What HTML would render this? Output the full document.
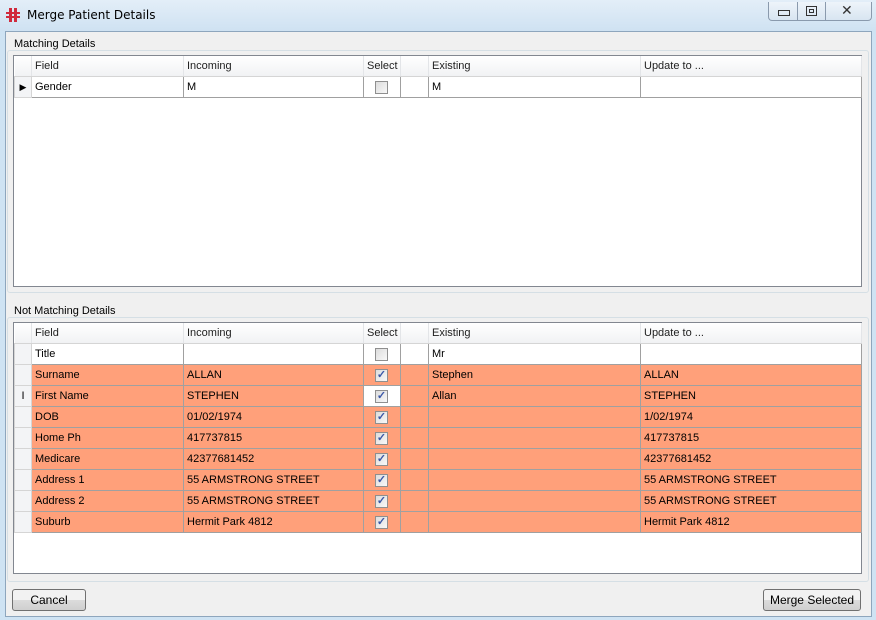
<!DOCTYPE html>
<html><head><style>
body{margin:0;width:876px;height:620px;overflow:hidden;font-family:"Liberation Sans",sans-serif;font-size:11px;color:#000;background:#cfe3f3;position:relative}
.title{position:absolute;left:0;top:0;width:876px;height:31px;background:linear-gradient(#e3eef8,#cfe2f2);}
.client{position:absolute;left:5px;top:31px;width:865px;height:584px;background:#f0f0f0;border:1px solid #8ea6bd}
.ab{position:absolute}
.gb{position:absolute;border:1px solid #d5dfe5;border-radius:3px}
.lbl{position:absolute;background:#f0f0f0;padding:0 2px}
table{position:absolute;border-collapse:collapse;table-layout:fixed;background:#fff}
td{height:20px;padding:0 0 0 3px;border:1px solid #a0a0a0;white-space:nowrap;overflow:hidden}
tr.h td{background:linear-gradient(#fff,#f1f2f4);border:none;border-right:1px solid #e3e5e8;border-bottom:1px solid #d5d5d5;color:#1e1e1e}
td.rh{background:#f3f4f6;border-color:#d5d5d5;padding:0}
tr.o td{background:#ffa07a}
tr.o td.rh{background:#f3f4f6}
.cb{display:inline-block;width:11px;height:11px;border:1px solid #8f8f8f;background:linear-gradient(135deg,#dcdcdc,#f8f8f8);vertical-align:middle;margin-left:8px;position:relative;font-size:11px;line-height:11px;color:#3b58a8;text-align:center;font-weight:bold}
.btn{position:absolute;height:20px;border:1px solid #707070;border-radius:3px;background:linear-gradient(#f2f2f2 50%,#dcdcdc 50%,#cfcfcf);text-align:center;line-height:20px;font-size:12px}
.grid{position:absolute;border:1px solid #828790;background:#fff}
</style></head><body>
<div class="title"></div>
<div class="ab" style="left:6px;top:8px;width:14px;height:14px">
<div class="ab" style="left:3px;top:0;width:3px;height:14px;background:#d02a3c"></div>
<div class="ab" style="left:8px;top:0;width:3px;height:14px;background:#d02a3c"></div>
<div class="ab" style="left:0;top:4px;width:14px;height:2px;background:#d02a3c"></div>
<div class="ab" style="left:0;top:8px;width:14px;height:2px;background:#d02a3c"></div></div>
<div class="ab" style="left:27px;top:8px;font-size:12px;font-family:'DejaVu Sans',sans-serif">Merge Patient Details</div>
<div class="ab" style="left:768px;top:2px;width:102px;height:18px;border:1px solid #8a9aad;border-top:none;border-radius:0 0 4px 4px;background:linear-gradient(#eef4fa,#d8e5f1)">
<div class="ab" style="left:28px;top:0;height:18px;border-left:1px solid #8a9aad"></div>
<div class="ab" style="left:56px;top:0;height:18px;border-left:1px solid #8a9aad"></div>
<div class="ab" style="left:9px;top:8px;width:10px;height:4px;border:1px solid #333"></div>
<div class="ab" style="left:37px;top:4px;width:9px;height:8px;border:1px solid #333"><div class="ab" style="left:2px;top:2px;width:3px;height:2px;border:1px solid #333"></div></div>
<div class="ab" style="left:72px;top:0;font-size:14px;color:#333">✕</div></div>
<div class="client"></div>

<div class="gb" style="left:7px;top:50px;width:860px;height:241px"></div>
<div class="lbl" style="left:12px;top:38px">Matching Details</div>
<div class="grid" style="left:13px;top:55px;width:847px;height:230px"></div>
<table style="left:14px;top:56px;width:847px">
<colgroup><col style="width:17px"><col style="width:152px"><col style="width:180px"><col style="width:37px"><col style="width:28px"><col style="width:212px"><col style="width:221px"></colgroup>
<tr class="h"><td class="rh"></td><td>Field</td><td>Incoming</td><td>Select</td><td></td><td>Existing</td><td>Update to ...</td></tr>
<tr><td class="rh" style="text-align:center;font-size:9px">▶</td><td>Gender</td><td>M</td><td><span class="cb"></span></td><td></td><td>M</td><td></td></tr>
</table>

<div class="gb" style="left:7px;top:317px;width:860px;height:263px"></div>
<div class="lbl" style="left:12px;top:305px">Not Matching Details</div>
<div class="grid" style="left:13px;top:322px;width:847px;height:250px"></div>
<table style="left:14px;top:323px;width:847px">
<colgroup><col style="width:17px"><col style="width:152px"><col style="width:180px"><col style="width:37px"><col style="width:28px"><col style="width:212px"><col style="width:221px"></colgroup>
<tr class="h"><td class="rh"></td><td>Field</td><td>Incoming</td><td>Select</td><td></td><td>Existing</td><td>Update to ...</td></tr>
<tr><td class="rh"></td><td>Title</td><td></td><td><span class="cb"></span></td><td></td><td>Mr</td><td></td></tr>
<tr class="o"><td class="rh"></td><td>Surname</td><td>ALLAN</td><td><span class="cb">✓</span></td><td></td><td>Stephen</td><td>ALLAN</td></tr>
<tr class="o"><td class="rh" style="text-align:center">I</td><td>First Name</td><td>STEPHEN</td><td style="background:#fff"><span class="cb">✓</span></td><td></td><td>Allan</td><td>STEPHEN</td></tr>
<tr class="o"><td class="rh"></td><td>DOB</td><td>01/02/1974</td><td><span class="cb">✓</span></td><td></td><td></td><td>1/02/1974</td></tr>
<tr class="o"><td class="rh"></td><td>Home Ph</td><td>417737815</td><td><span class="cb">✓</span></td><td></td><td></td><td>417737815</td></tr>
<tr class="o"><td class="rh"></td><td>Medicare</td><td>42377681452</td><td><span class="cb">✓</span></td><td></td><td></td><td>42377681452</td></tr>
<tr class="o"><td class="rh"></td><td>Address 1</td><td>55 ARMSTRONG STREET</td><td><span class="cb">✓</span></td><td></td><td></td><td>55 ARMSTRONG STREET</td></tr>
<tr class="o"><td class="rh"></td><td>Address 2</td><td>55 ARMSTRONG STREET</td><td><span class="cb">✓</span></td><td></td><td></td><td>55 ARMSTRONG STREET</td></tr>
<tr class="o"><td class="rh"></td><td>Suburb</td><td>Hermit Park 4812</td><td><span class="cb">✓</span></td><td></td><td></td><td>Hermit Park 4812</td></tr>
</table>

<div class="btn" style="left:12px;top:589px;width:72px">Cancel</div>
<div class="btn" style="left:763px;top:589px;width:96px">Merge Selected</div>
</body></html>
